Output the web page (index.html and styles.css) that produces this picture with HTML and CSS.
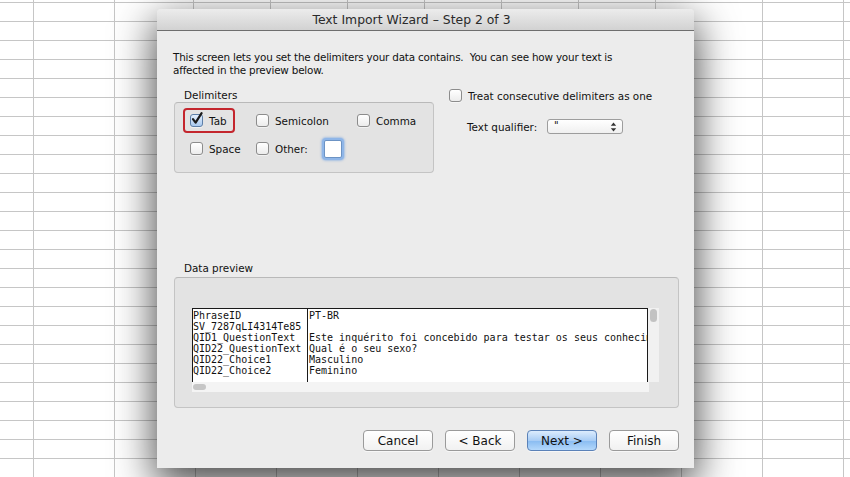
FILE: index.html
```html
<!DOCTYPE html>
<html>
<head>
<meta charset="utf-8">
<title>Text Import Wizard</title>
<link rel="stylesheet" href="styles.css">
</head>
<body>
<div class="topstrip"></div>
<div class="dialog">
  <div class="titlebar">Text Import Wizard – Step 2 of 3</div>
  <div class="content">
    <p class="intro">This screen lets you set the delimiters your data contains.&nbsp; You can see how your text is<br>affected in the preview below.</p>
    <div class="options">
      <div class="delims">
        <div class="grouplabel">Delimiters</div>
        <div class="groupbox delimbox">
          <label class="item hl"><span class="cb checked"><svg width="16" height="16" viewBox="0 0 16 16"><path d="M4 8.2 L6.6 11.6 L12.6 2.2" fill="none" stroke="#1b1b1b" stroke-width="2.2" stroke-linecap="round" stroke-linejoin="round"/></svg></span>Tab</label>
          <label class="item"><span class="cb"></span>Semicolon</label>
          <label class="item"><span class="cb"></span>Comma</label>
          <label class="item"><span class="cb"></span>Space</label>
          <label class="item"><span class="cb"></span>Other:<span class="otherbox"></span></label>
        </div>
      </div>
      <div class="rightcol">
        <label class="item plain"><span class="cb"></span>Treat consecutive delimiters as one</label>
        <div class="qual">
          <span class="quallabel">Text qualifier:</span>
          <span class="select"><span class="selval">"</span><svg class="arrows" width="7" height="10" viewBox="0 0 7 10"><path d="M3.5 0.5 L6.2 3.8 L0.8 3.8 Z M3.5 9.5 L6.2 6.2 L0.8 6.2 Z" fill="#333"/></svg></span>
        </div>
      </div>
    </div>
    <div class="grouplabel dplabel">Data preview</div>
    <div class="groupbox preview">
      <div class="pvrow">
        <div class="ptable">
          <div class="pcol c1"><div class="prow">PhraseID</div><div class="prow">SV_7287qLI4314Te85</div><div class="prow">QID1_QuestionText</div><div class="prow">QID22_QuestionText</div><div class="prow">QID22_Choice1</div><div class="prow">QID22_Choice2</div></div>
          <div class="pcol c2"><div class="prow">PT-BR</div><div class="prow">&nbsp;</div><div class="prow">Este inquérito foi concebido para testar os seus conhecim</div><div class="prow">Qual é o seu sexo?</div><div class="prow">Masculino</div><div class="prow">Feminino</div></div>
        </div>
        <div class="vscroll"><div class="vthumb"></div></div>
      </div>
      <div class="hscroll"><div class="hthumb"></div></div>
    </div>
    <div class="buttons">
      <button class="btn">Cancel</button>
      <button class="btn">&lt; Back</button>
      <button class="btn primary">Next &gt;</button>
      <button class="btn">Finish</button>
    </div>
  </div>
</div>
</body>
</html>
```
FILE: styles.css
```css
html, body {
  margin: 0;
  padding: 0;
  width: 850px;
  height: 477px;
  overflow: hidden;
}
body {
  background-color: #ffffff;
  background-image:
    linear-gradient(to right, #c6c6c6 1px, transparent 1px),
    linear-gradient(to bottom, #c6c6c6 1px, transparent 1px);
  background-size: 81px 100%, 100% 19px;
  background-position: 33px 0, 0 2px;
  font-family: "DejaVu Sans", "Liberation Sans", sans-serif;
  font-size: 10.4px;
  color: #111;
}
.topstrip {
  margin-left: 157px;
  width: 537px;
  height: 9px;
  background-color: #fff;
  background-image:
    linear-gradient(to right, #c6c6c6 1px, transparent 1px),
    linear-gradient(to bottom, #c6c6c6 1px, transparent 1px);
  background-size: 77px 100%, 100% 19px;
  background-position: 36px 0, 0 2px;
}
.dialog {
  margin-left: 157px;
  width: 537px;
  height: 459px;
  background: #ececec;
  border-radius: 4px 4px 0 0;
  box-shadow: 0 14px 42px 2px rgba(0,0,0,0.72);
  display: flex;
  flex-direction: column;
}
.titlebar {
  height: 21px;
  line-height: 21px;
  text-align: center;
  font-size: 12.4px;
  color: #2a2a2a;
  padding-right: 28px;
  background: linear-gradient(to bottom, #ececec, #d2d2d2);
  border-bottom: 1px solid #6e6e6e;
  border-radius: 4px 4px 0 0;
}
.content {
  padding: 0 15px 0 16px;
  display: flex;
  flex-direction: column;
}
.intro {
  margin: 20px 0 0 0;
  line-height: 13px;
  letter-spacing: -0.2px;
}
.options {
  display: flex;
  margin-top: 12px;
}
.grouplabel {
  line-height: 13px;
  margin-left: 11px;
}
.groupbox {
  background: #e3e3e3;
  border: 1px solid #c4c4c4;
  border-top-color: #b9b9b9;
  border-radius: 4px;
  margin-left: 1px;
}
.delimbox {
  box-sizing: content-box;
  display: grid;
  grid-template-columns: 66px 101px auto;
  grid-template-rows: 25px 25px;
  row-gap: 3px;
  padding: 5px 0 0 8px;
  width: 250px;
  height: 64px;
}
.item {
  display: flex;
  align-items: center;
  border: 2px solid transparent;
  border-radius: 4px;
  padding: 0 6px 0 5px;
  align-self: start;
  height: 21px;
  white-space: nowrap;
}
.item.hl {
  border-color: #c4262e;
  justify-self: start;
}
.cb {
  width: 11px;
  height: 11px;
  border: 1px solid #8c8c8c;
  border-radius: 3px;
  background: linear-gradient(to bottom, #ffffff, #ececec);
  margin-right: 6px;
  flex: none;
  position: relative;
  box-shadow: 0 1px 0 rgba(255,255,255,0.5);
}
.cb.checked {
  background: linear-gradient(to bottom, #e3effc, #a9c9ef);
  border-color: #5d7fa8;
}
.cb.checked svg {
  position: absolute;
  left: -2px;
  top: -4px;
}
.otherbox {
  width: 18px;
  height: 16px;
  margin-left: 16px;
  margin-top: 1px;
  background: #fff;
  border: 1px solid #6c93c4;
  box-shadow: 0 0 0 2px #8fb6e8, 0 0 2px 3px rgba(120,165,225,0.55);
  border-radius: 2px;
}
.rightcol {
  margin-left: 13px;
  display: flex;
  flex-direction: column;
}
.item.plain {
  height: 13px;
  padding: 0;
  margin-top: -2px;
}
.qual {
  display: flex;
  align-items: center;
  margin-top: 15px;
  margin-left: 20px;
}
.quallabel {
  width: 80px;
}
.select {
  height: 13px;
  border: 1px solid #9d9d9d;
  border-radius: 3px;
  background: linear-gradient(to bottom, #ffffff, #f0f0f0);
  display: flex;
  align-items: center;
  justify-content: space-between;
  padding: 0 5px 0 6px;
  box-sizing: content-box;
  width: 63px;
  font-size: 10px;
}
.selval {
  line-height: 13px;
  margin-top: -2px;
}
.dplabel {
  margin-top: 89px;
  margin-bottom: 2px;
}
.preview {
  width: 467px;
  height: 84px;
  padding: 30px 19px 15px 17px;
  box-sizing: content-box;
  display: flex;
  flex-direction: column;
}
.pvrow {
  display: flex;
  height: 74px;
}
.ptable {
  width: 455px;
  height: 73px;
  background: #fff;
  border: 1px solid #1a1a1a;
  border-bottom: none;
  display: flex;
  overflow: hidden;
  font-family: "DejaVu Sans Mono", "Liberation Mono", monospace;
  font-size: 10px;
  color: #111;
}
.pcol {
  padding-top: 2px;
  white-space: nowrap;
  overflow: hidden;
}
.prow {
  height: 11px;
  line-height: 9px;
}
.c1 {
  width: 114px;
  flex: none;
  border-right: 1px solid #1a1a1a;
}
.c2 {
  flex: 1;
  padding-left: 1px;
}
.vscroll {
  width: 11px;
  background: #f1f1f1;
  display: flex;
  justify-content: center;
}
.vthumb {
  width: 7px;
  height: 13px;
  margin-top: 1px;
  border-radius: 4px;
  background: #c2c2c2;
}
.hscroll {
  width: 457px;
  height: 10px;
  background: #f4f4f4;
  display: flex;
  align-items: center;
}
.hthumb {
  width: 13px;
  height: 6px;
  margin-left: 1px;
  border-radius: 3px;
  background: #c6c6c6;
}
.buttons {
  display: flex;
  justify-content: flex-end;
  gap: 12px;
  margin-top: 22px;
}
.btn {
  width: 70px;
  height: 21px;
  font-family: "DejaVu Sans", "Liberation Sans", sans-serif;
  font-size: 12px;
  color: #111;
  border: 1px solid #9a9a9a;
  border-radius: 4px;
  background: linear-gradient(to bottom, #ffffff, #f1f1f1);
  padding: 0;
  box-shadow: 0 1px 0 rgba(255,255,255,0.6);
}
.btn.primary {
  border-color: #5b82b8;
  background: linear-gradient(to bottom, #dcecfd 0%, #a9cdf5 50%, #88bbf1 51%, #b4d8fb 100%);
}
```
